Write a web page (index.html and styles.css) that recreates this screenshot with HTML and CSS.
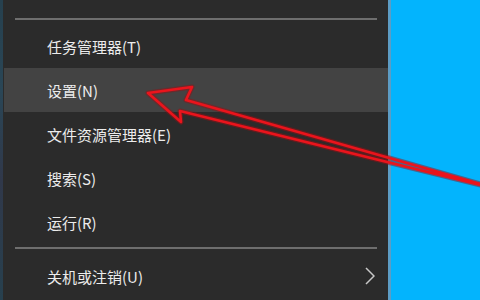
FILE: index.html
```html
<!DOCTYPE html>
<html lang="zh-CN">
<head>
<meta charset="utf-8">
<link rel="stylesheet" href="styles.css">
</head>
<body>
<div class="screen">
  <div class="edge"></div>
  <div class="menu">
    <div class="sep sep-top"></div>
    <div class="item">任务管理器(T)</div>
    <div class="item hover">设置(N)</div>
    <div class="item">文件资源管理器(E)</div>
    <div class="item">搜索(S)</div>
    <div class="item">运行(R)</div>
    <div class="sep sep-bottom"></div>
    <div class="item sub">关机或注销(U)
      <svg class="chev" width="10" height="18" viewBox="0 0 10 18"><polyline points="1,1 9,9 1,17" fill="none" stroke="#c8c8c8" stroke-width="1.5"/></svg>
    </div>
  </div>
  <div class="border"></div>
  <div class="desktop"></div>
  <svg class="arrow" width="480" height="300" viewBox="0 0 480 300">
    <g fill="none" stroke-linejoin="round" stroke-linecap="round">
      <path d="M505,191 L186,100 L192,87 L148,93 L181,122 L180,111 L505,191" stroke="#9a1014" stroke-opacity="0.5" stroke-width="5"/>
      <path d="M505,191 L186,100 L192,87 L148,93 L181,122 L180,111 L505,191" stroke="#ea141c" stroke-width="2.6"/>
    </g>
  </svg>
</div>
</body>
</html>
```
FILE: styles.css
```css
html, body {
  margin: 0;
  padding: 0;
  width: 480px;
  height: 300px;
  overflow: hidden;
  background: #2b2b2b;
}
.screen {
  position: relative;
  display: flex;
  width: 480px;
  height: 300px;
  font-family: "Noto Sans CJK SC", "Noto Sans", sans-serif;
}
.edge {
  width: 3px;
  background: linear-gradient(#26404e, #2a4656 30%, #30384a 60%, #27404e);
}
.menu {
  width: 385px;
  background: #2b2b2b;
  display: flex;
  flex-direction: column;
  padding-top: 18px;
  box-sizing: border-box;
}
.sep {
  height: 2px;
  background: #6e6e6e;
  margin-left: 12px;
  margin-right: 11px;
}
.sep-top { margin-bottom: 4px; }
.sep-bottom { margin-top: 3px; margin-bottom: 5px; }
.item {
  height: 44px;
  display: flex;
  align-items: center;
  padding-left: 43px;
  margin-left: 1px;
  font-size: 15px;
  color: #ececec;
  position: relative;
}
.hover { background: #434343; }
.sub { justify-content: space-between; padding-right: 13px; }
.border {
  width: 3px;
  background: #5d9cc4;
}
.desktop {
  flex: 1;
  background: #03b4fd;
}
.arrow {
  position: absolute;
  left: 0;
  top: 0;
}
```
